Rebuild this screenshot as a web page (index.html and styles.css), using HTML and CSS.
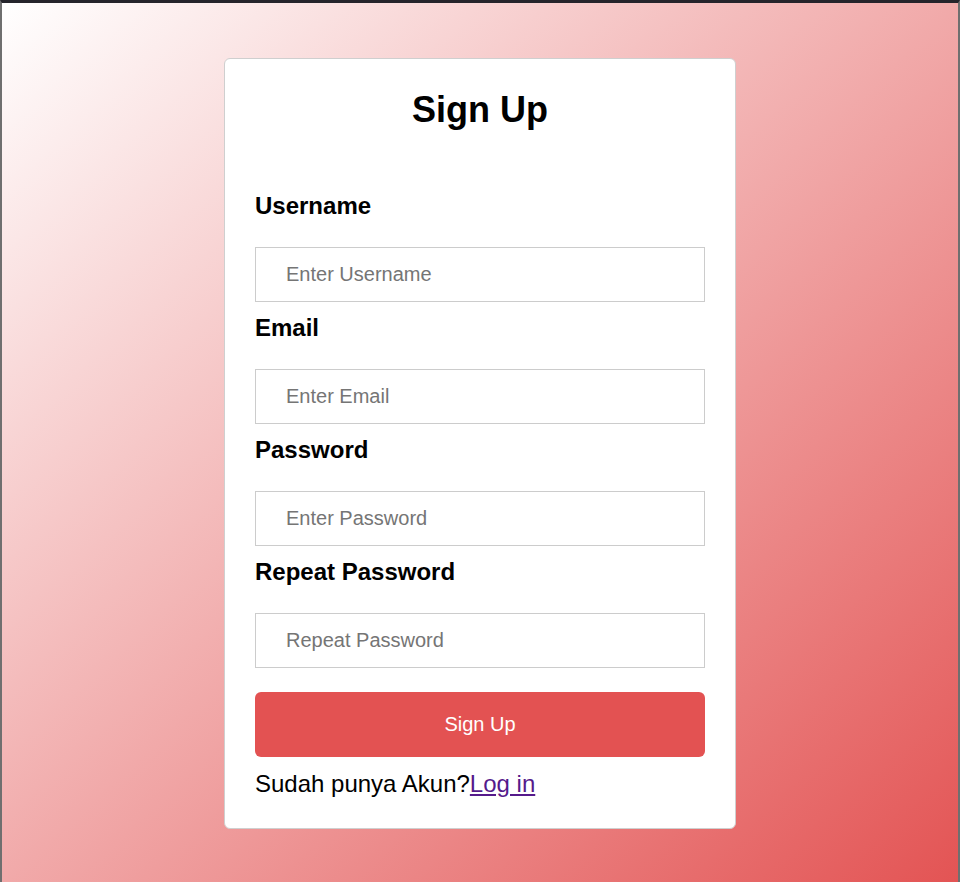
FILE: index.html
```html
<!DOCTYPE html>
<html lang="id">
<head>
<meta charset="utf-8">
<title>Sign Up</title>
<link rel="stylesheet" href="styles.css">
</head>
<body>
<div class="frame">
  <div class="card">
    <h1 class="title">Sign Up</h1>
    <form class="form">
      <label class="label" for="username">Username</label>
      <input class="field" id="username" type="text" placeholder="Enter Username">
      <label class="label" for="email">Email</label>
      <input class="field" id="email" type="email" placeholder="Enter Email">
      <label class="label" for="password">Password</label>
      <input class="field" id="password" type="password" placeholder="Enter Password">
      <label class="label" for="repeat">Repeat Password</label>
      <input class="field" id="repeat" type="password" placeholder="Repeat Password">
      <button class="submit" type="button">Sign Up</button>
      <p class="note">Sudah punya Akun?<a class="link" href="#">Log in</a></p>
    </form>
  </div>
</div>
</body>
</html>
```
FILE: styles.css
```css
html, body {
  margin: 0;
  padding: 0;
}
body {
  font-family: "Liberation Sans", Arial, sans-serif;
  font-size: 24px;
  color: #000;
}
.frame {
  box-sizing: border-box;
  min-height: 100vh;
  border-top: 3px solid #25242b;
  border-left: 2px solid #6f6f6f;
  border-right: 2px solid #6f6f6f;
  background: linear-gradient(to bottom right, #ffffff 0%, #e35454 100%);
  padding-top: 55px;
  display: flex;
  flex-direction: column;
  align-items: center;
}
.card {
  box-sizing: border-box;
  width: 512px;
  background: #fff;
  border: 1px solid #cfcfcf;
  border-radius: 6px;
  padding: 30px 30px 30px;
}
.title {
  margin: 0 0 50px;
  font-size: 36px;
  line-height: 41px;
  font-weight: bold;
  text-align: center;
}
.form {
  display: flex;
  flex-direction: column;
}
.label {
  display: block;
  font-weight: bold;
  font-size: 24px;
  line-height: 28px;
  margin: 12px 0 27px;
}
.field {
  box-sizing: border-box;
  width: 100%;
  height: 55px;
  margin: 0;
  padding: 0 30px;
  border: 1px solid #cccccc;
  border-radius: 0;
  font-family: "Liberation Sans", Arial, sans-serif;
  font-size: 20px;
  color: #000;
  background: #fff;
  outline: none;
}
.field::placeholder {
  color: #757575;
}
.submit {
  margin-top: 24px;
  height: 65px;
  width: 100%;
  border: none;
  border-radius: 6px;
  background: #e35252;
  color: #fff;
  font-family: "Liberation Sans", Arial, sans-serif;
  font-size: 20px;
  cursor: pointer;
}
.note {
  margin: 13px 0 0;
  font-size: 24px;
  line-height: 28px;
}
.link {
  color: #551a8b;
  text-decoration: underline;
}
```
